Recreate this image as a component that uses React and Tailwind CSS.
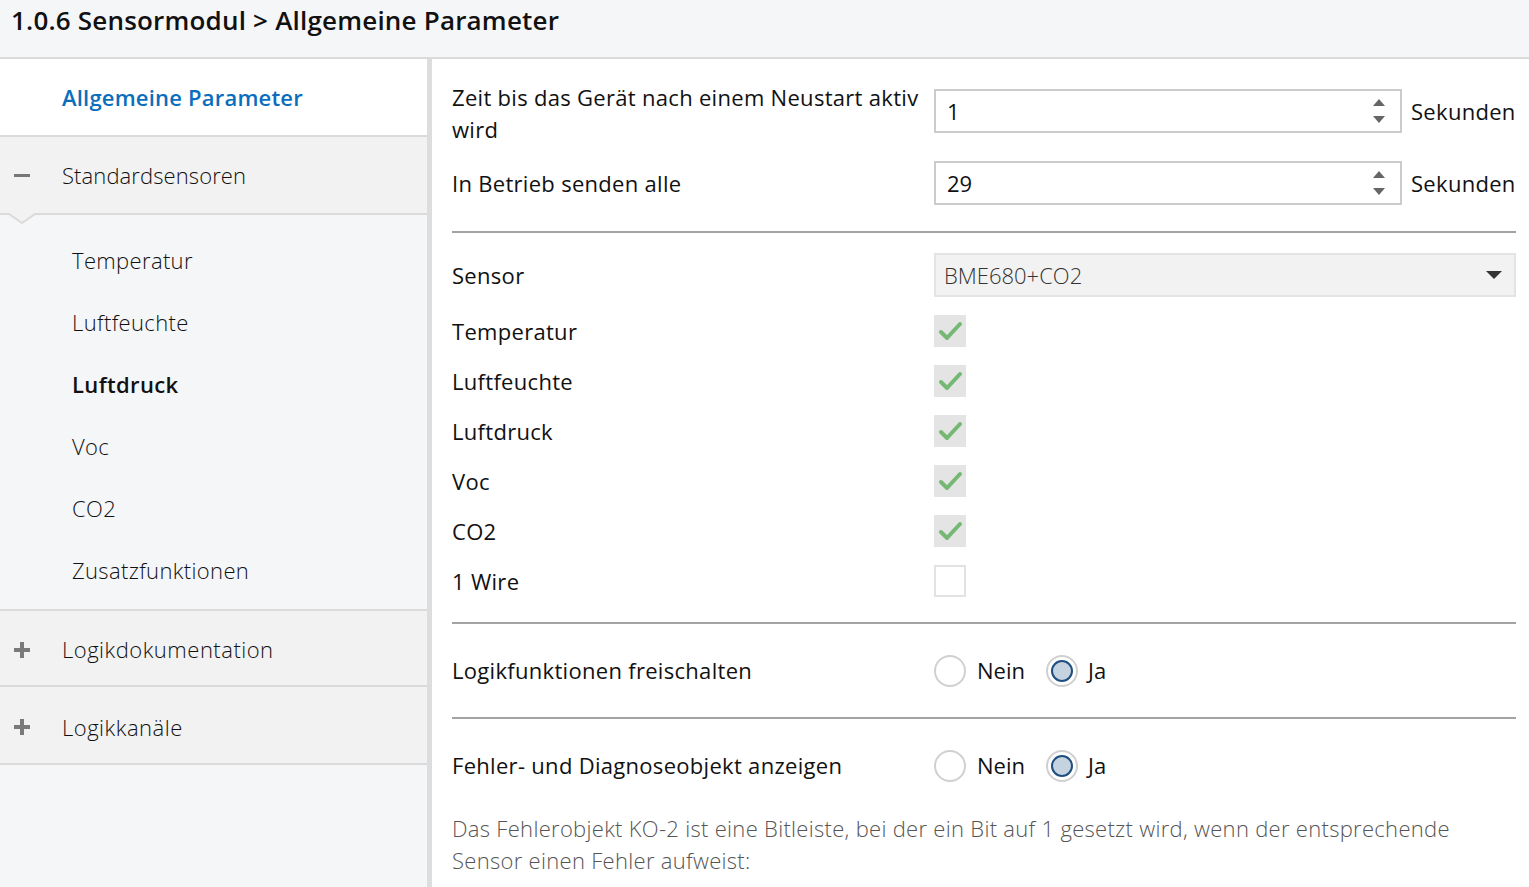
import React from "react";

const FONT = { fontFamily: '"Open Sans", "Noto Sans", Arial, sans-serif' };

function Check() {
  return (
    <div className="w-[32px] h-[32px] bg-[#e4e4e4] flex items-center justify-center">
      <svg width="32" height="32" viewBox="0 0 32 32">
        <path d="M7 17 L13 23 L26 9" fill="none" stroke="#74b874" strokeWidth="4" strokeLinecap="round" strokeLinejoin="round" />
      </svg>
    </div>
  );
}

function Empty() {
  return <div className="w-[32px] h-[32px] bg-white border-2 border-[#e2e2e2]" />;
}

function Radio({ selected }) {
  return (
    <div className="w-[32px] h-[32px] rounded-full border-2 border-[#d0d0d0] bg-white flex items-center justify-center">
      {selected && <div className="w-[22px] h-[22px] rounded-full border-2 border-[#1f4e80] bg-[#c5d3e1]" />}
    </div>
  );
}

function Plus() {
  return (
    <div className="relative w-[16px] h-[16px]">
      <div className="absolute left-0 top-[6px] w-[16px] h-[4px] bg-[#7a7a7a]" />
      <div className="absolute left-[6px] top-0 w-[4px] h-[16px] bg-[#7a7a7a]" />
    </div>
  );
}

function Spinner() {
  return (
    <div className="flex flex-col items-center gap-[10px] mr-[15px]">
      <svg width="12" height="7" viewBox="0 0 12 7"><path d="M6 0 L12 7 L0 7 Z" fill="#666" /></svg>
      <svg width="12" height="7" viewBox="0 0 12 7"><path d="M0 0 L12 0 L6 7 Z" fill="#666" /></svg>
    </div>
  );
}

function NumberInput({ value }) {
  return (
    <div className="flex items-center">
      <div className="w-[468px] h-[44px] border-2 border-[#cccccc] bg-white flex items-center justify-between pl-[11px]">
        <span className="text-[22px] text-[#111]">{value}</span>
        <Spinner />
      </div>
      <span className="ml-[9px] text-[22px] tracking-[0.3px] text-[#111]">Sekunden</span>
    </div>
  );
}

function RadioPair() {
  return (
    <div className="flex items-center">
      <Radio />
      <span className="ml-[11px] text-[22px] text-[#111]">Nein</span>
      <div className="ml-[21px]"><Radio selected /></div>
      <span className="ml-[10px] text-[22px] text-[#111]">Ja</span>
    </div>
  );
}

function Divider() {
  return <div className="h-[2px] bg-[#a3a3a3]" />;
}

const LABEL_W = "w-[482px] text-[22px] tracking-[0.3px]";

export default function App() {
  const subs = ["Temperatur", "Luftfeuchte", "Luftdruck", "Voc", "CO2", "Zusatzfunktionen"];
  const checks = [
    ["Temperatur", true],
    ["Luftfeuchte", true],
    ["Luftdruck", true],
    ["Voc", true],
    ["CO2", true],
    ["1 Wire", false],
  ];
  return (
    <div className="w-[1529px] h-[887px] overflow-hidden bg-white flex flex-col" style={FONT}>
      <header className="h-[59px] shrink-0 bg-[#f5f6f8] border-b-2 border-[#dadada] pl-[11px] pt-[2px]">
        <h1 className="text-[26px] tracking-[0.2px] leading-[36px] font-semibold text-[#111]">1.0.6 Sensormodul &gt; Allgemeine Parameter</h1>
      </header>
      <div className="flex flex-1 min-h-0">
        <aside className="w-[432px] shrink-0 bg-[#f5f6f8] border-r-[5px] border-[#dcdddf] flex flex-col">
          <div className="h-[78px] bg-white border-b-2 border-[#dadada] pl-[62px] flex items-center">
            <span className="text-[22px] tracking-[0.2px] font-semibold text-[#0a6ebd]">Allgemeine Parameter</span>
          </div>
          <div className="relative h-[78px] bg-[#f2f2f2] border-b-2 border-[#dadada] flex items-center">
            <div className="w-[62px] pl-[14px]"><div className="w-[16px] h-[3px] bg-[#777]" /></div>
            <span className="text-[22px] tracking-[0.1px] font-light text-[#111]">Standardsensoren</span>
            <svg className="absolute left-[9px] top-[76px]" width="26" height="12" viewBox="0 0 26 12">
              <path d="M0 0 L13 10 L26 0 Z" fill="#f2f2f2" />
              <path d="M0 1 L13 10 L26 1" fill="none" stroke="#dadada" strokeWidth="2" />
            </svg>
          </div>
          <div className="pt-[14px] pb-[8px]">
            {subs.map((s) => (
              <div key={s} className="h-[62px] pl-[72px] flex items-center">
                <span className={"text-[22px] tracking-[0.35px] text-[#111] " + (s === "Luftdruck" ? "font-semibold" : "font-light")}>{s}</span>
              </div>
            ))}
          </div>
          <div className="h-[78px] bg-[#f2f2f2] border-y-2 border-[#dadada] flex items-center pt-[3px]">
            <div className="w-[62px] pl-[14px]"><Plus /></div>
            <span className="text-[22px] tracking-[0.5px] font-light text-[#111]">Logikdokumentation</span>
          </div>
          <div className="h-[78px] bg-[#f2f2f2] border-b-2 border-[#dadada] flex items-center pt-[4px]">
            <div className="w-[62px] pl-[14px]"><Plus /></div>
            <span className="text-[22px] tracking-[0.5px] font-light text-[#111]">Logikkanäle</span>
          </div>
        </aside>
        <main className="flex-1 pl-[20px] pr-[13px] flex flex-col text-[#111]">
          <div className="mt-[22px] flex items-start">
            <div className={LABEL_W + " leading-[32px] pr-[10px]"}>Zeit bis das Gerät nach einem Neustart aktiv wird</div>
            <div className="mt-[8px]"><NumberInput value="1" /></div>
          </div>
          <div className="mt-[16px] flex items-center h-[44px]">
            <div className={LABEL_W}>In Betrieb senden alle</div>
            <NumberInput value="29" />
          </div>
          <div className="mt-[26px]"><Divider /></div>
          <div className="mt-[20px] flex items-center h-[44px]">
            <div className={LABEL_W}>Sensor</div>
            <div className="flex-1 h-[44px] bg-[#f2f2f2] border-2 border-[#e4e4e4] flex items-center justify-between pl-[8px] pr-[12px]">
              <span className="text-[22px] font-light text-[#333]">BME680+CO2</span>
              <svg width="16" height="8" viewBox="0 0 16 8"><path d="M0 0 L16 0 L8 8 Z" fill="#333" /></svg>
            </div>
          </div>
          <div className="mt-[9px]">
            {checks.map(([l, c]) => (
              <div key={l} className="h-[50px] flex items-center">
                <div className={LABEL_W}>{l}</div>
                {c ? <Check /> : <Empty />}
              </div>
            ))}
          </div>
          <div className="mt-[16px]"><Divider /></div>
          <div className="h-[93px] flex items-center">
            <div className={LABEL_W}>Logikfunktionen freischalten</div>
            <RadioPair />
          </div>
          <Divider />
          <div className="h-[93px] flex items-center">
            <div className={LABEL_W}>Fehler- und Diagnoseobjekt anzeigen</div>
            <RadioPair />
          </div>
          <p className="text-[22px] tracking-[0.3px] leading-[32px] font-light text-[#555] pr-[40px]">
            Das Fehlerobjekt KO-2 ist eine Bitleiste, bei der ein Bit auf 1 gesetzt wird, wenn der entsprechende Sensor einen Fehler aufweist:
          </p>
        </main>
      </div>
    </div>
  );
}
